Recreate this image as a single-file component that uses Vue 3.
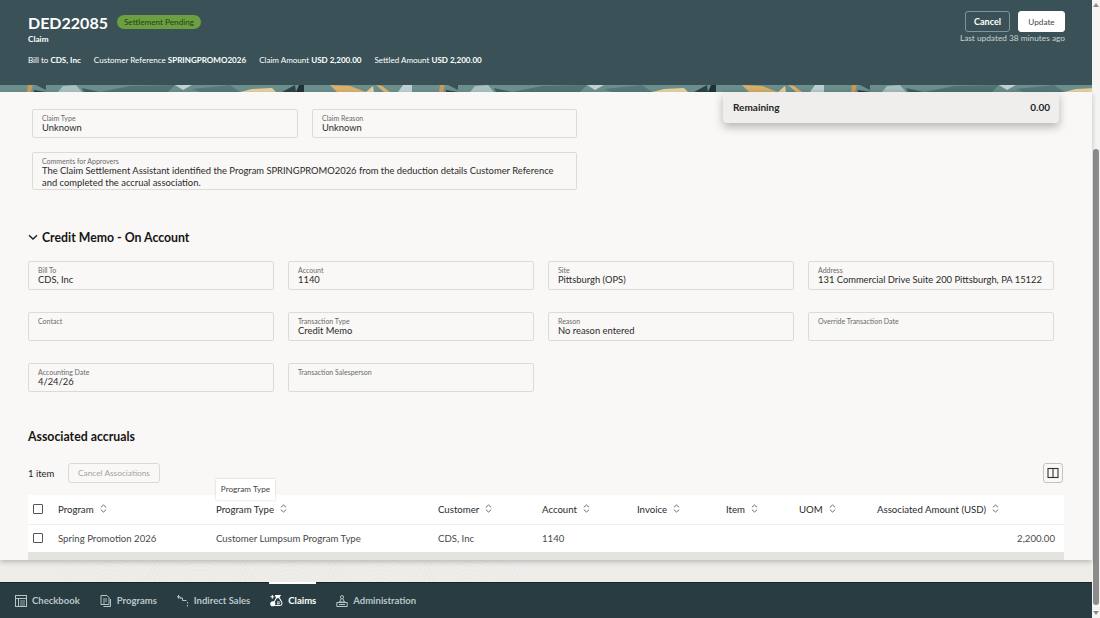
<script setup>
const metaItems = [
  { label: "Bill to", value: "CDS, Inc" },
  { label: "Customer Reference", value: "SPRINGPROMO2026" },
  { label: "Claim Amount", value: "USD 2,200.00" },
  { label: "Settled Amount", value: "USD 2,200.00" },
];

const memoFields = [
  { label: "Bill To", value: "CDS, Inc" },
  { label: "Account", value: "1140" },
  { label: "Site", value: "Pittsburgh (OPS)" },
  { label: "Address", value: "131 Commercial Drive Suite 200 Pittsburgh, PA 15122" },
  { label: "Contact", value: "" },
  { label: "Transaction Type", value: "Credit Memo" },
  { label: "Reason", value: "No reason entered" },
  { label: "Override Transaction Date", value: "" },
  { label: "Accounting Date", value: "4/24/26" },
  { label: "Transaction Salesperson", value: "" },
];

const columns = ["Program", "Program Type", "Customer", "Account", "Invoice", "Item", "UOM", "Associated Amount (USD)"];

const rowCells = ["Spring Promotion 2026", "Customer Lumpsum Program Type", "CDS, Inc", "1140", "", "", ""];

// grain rings in the band under the sheet
const rings = [];
for (const cx of [110, 200, 290, 380, 470]) {
  for (let r = 6; r < 62; r += 4) rings.push({ cx, r });
}
</script>

<template>
  <div class="app">
    <div class="main">
      <header class="head">
        <div class="head-top">
          <div class="head-left">
            <div class="title-row">
              <h1 class="title">DED22085</h1>
              <span class="pill">Settlement Pending</span>
            </div>
            <div class="subtitle">Claim</div>
            <div class="meta">
              <span v-for="m in metaItems" :key="m.label">{{ m.label }} <b>{{ m.value }}</b></span>
            </div>
          </div>
          <div class="head-right">
            <div class="head-btns">
              <button class="btn-ghost">Cancel</button>
              <button class="btn-white">Update</button>
            </div>
            <div class="updated">Last updated 38 minutes ago</div>
          </div>
        </div>
        <svg class="strip" width="100%" height="7">
          <defs>
            <pattern id="leafs" width="412" height="7" patternUnits="userSpaceOnUse">
              <rect width="412" height="7" fill="#6b8f8c" />
              <polygon points="28,0 33,0 31,7 27,7" fill="#c99b58" />
              <polygon points="34,5 46,7 34,7" fill="#2b4247" />
              <polygon points="36,0 46,0 46,5" fill="#3a5257" />
              <polygon points="58,7 63,1 76,0 82,7" fill="#a9c0c1" />
              <polygon points="82,3 100,7 84,7" fill="#3f5f62" />
              <polygon points="100,7 130,1 175,0 168,7" fill="#4f7472" />
              <polygon points="175,0 192,0 183,5" fill="#c0d0d3" />
              <polygon points="192,4 230,0 240,7 200,7" fill="#55787a" />
              <polygon points="240,7 252,4 272,3 276,7" fill="#e6cf9f" />
              <polygon points="282,7 295,0 296,7" fill="#2b4247" />
              <polygon points="296,7 299,0 304,0 304,7" fill="#1f3236" />
              <polygon points="330,0 350,1 366,7 337,7" fill="#d9b06c" />
              <polygon points="366,7 373,1 374,7" fill="#e6cf9f" />
              <polygon points="376,0 382,1 390,7 384,7" fill="#d9b06c" />
              <polygon points="398,7 403,0 420,0 424,7" fill="#bccfd2" />
            </pattern>
          </defs>
          <rect width="100%" height="7" fill="url(#leafs)" />
        </svg>
      </header>

      <section class="sheet">
        <div class="remaining">
          <span>Remaining</span>
          <span>0.00</span>
        </div>

        <div class="claim-grid">
          <div class="field">
            <label>Claim Type</label>
            <div class="val">Unknown</div>
          </div>
          <div class="field">
            <label>Claim Reason</label>
            <div class="val">Unknown</div>
          </div>
          <div class="field field-wide">
            <label>Comments for Approvers</label>
            <div class="val wrap">The Claim Settlement Assistant identified the Program SPRINGPROMO2026 from the deduction details Customer Reference and completed the accrual association.</div>
          </div>
        </div>

        <h2 class="section-title">
          <svg width="10" height="10" viewBox="0 0 10 10" fill="none" stroke="#1c1c1c" stroke-width="1.3">
            <path d="M1 3.2 5 7 9 3.2" />
          </svg>
          Credit Memo - On Account
        </h2>

        <div class="memo-grid">
          <div class="field" v-for="f in memoFields" :key="f.label">
            <label>{{ f.label }}</label>
            <div class="val">{{ f.value }}</div>
          </div>
        </div>

        <h2 class="accruals-title">Associated accruals</h2>

        <div class="toolbar">
          <span class="count">1 item</span>
          <button class="btn-disabled">Cancel Associations</button>
          <button class="btn-cols" aria-label="Columns">
            <svg width="12" height="12" viewBox="0 0 12 12" fill="none" stroke="#333" stroke-width="1.1">
              <rect x="1" y="1.5" width="10" height="9" />
              <path d="M6 1.5v9" />
            </svg>
          </button>
        </div>

        <div class="table">
          <div class="tooltip">Program Type</div>
          <div class="tr th">
            <div class="cell"><span class="check"></span></div>
            <div class="cell" v-for="c in columns" :key="c">
              {{ c }}
              <svg class="sort" width="7" height="9" viewBox="0 0 8 10" fill="none" stroke="#444" stroke-width="0.9">
                <path d="M1 3.6 4 1l3 2.6M1 6.4 4 9l3-2.6" />
              </svg>
            </div>
          </div>
          <div class="tr td">
            <div class="cell"><span class="check"></span></div>
            <div class="cell" v-for="(c, i) in rowCells" :key="i">{{ c }}</div>
            <div class="cell amount">2,200.00</div>
          </div>
          <div class="hscroll"></div>
        </div>
      </section>

      <div class="band">
        <svg width="100%" height="22" fill="none" stroke="#e6e5e1" stroke-width="0.5">
          <circle v-for="(g, i) in rings" :key="i" :cx="g.cx" cy="40" :r="g.r" />
        </svg>
      </div>

      <nav class="nav">
        <a class="nav-item">
          <svg width="12" height="12" viewBox="0 0 12 12" fill="none" stroke="#b9c6c8" stroke-width="1">
            <rect x="0.5" y="0.5" width="11" height="11" />
            <path d="M0.5 3.5h11M3.5 3.5v8" />
            <path d="M5 6h5M5 8h5M5 10h5" stroke-width="0.8" />
          </svg>
          Checkbook
        </a>
        <a class="nav-item">
          <svg width="12" height="12" viewBox="0 0 12 12" fill="none" stroke="#b9c6c8" stroke-width="1">
            <path d="M1 0.5h6l2 2v7H1z" />
            <path d="M3 4h4M3 6h4M3 8h2" stroke-width="0.9" />
            <path d="M10.5 4v7.5H3.5" />
          </svg>
          Programs
        </a>
        <a class="nav-item">
          <svg width="12" height="12" viewBox="0 0 12 12" fill="none" stroke="#b9c6c8" stroke-width="1">
            <path d="M1.5 0v3.5M0 1.8h3.5" />
            <path d="M3.5 3h2v2.5h4" />
            <circle cx="3.2" cy="3" r="0.8" fill="#b9c6c8" stroke="none" />
            <path d="M10.5 7v1.5M10.5 10v1.5" />
          </svg>
          Indirect Sales
        </a>
        <a class="nav-item active">
          <svg width="13" height="13" viewBox="0 0 14 14" fill="none" stroke="#fff" stroke-width="1.1">
            <path d="M0.5 3h4M2.5 1v4" />
            <path d="M6 1.5h5L9.5 4H7z" fill="#fff" />
            <path d="M7 4 4.5 8.5c-1 2 0 4 2.5 4h3c2.5 0 3.5-2 2.5-4L10 4" />
            <circle cx="3" cy="10.5" r="2.2" fill="#fff" />
            <path d="M7.5 8.5h3M7.5 10.5h3" />
          </svg>
          Claims
        </a>
        <a class="nav-item">
          <svg width="12" height="12" viewBox="0 0 12 12" fill="none" stroke="#b9c6c8" stroke-width="1">
            <circle cx="6" cy="2.2" r="1.6" />
            <path d="M5 4 3.5 7h5L7 4" />
            <path d="M0.8 7.5h10.4v4H0.8z" />
            <path d="M3 9.5h6" />
          </svg>
          Administration
        </a>
      </nav>
    </div>

    <div class="scrollbar">
      <span class="arrow up"></span>
      <div class="thumb"></div>
      <span class="arrow down"></span>
    </div>
  </div>
</template>

<style scoped>
.app {
  display: flex;
  height: 618px;
  font-family: Lato, "Noto Sans", sans-serif;
  color: #1f1f1f;
}
.main {
  flex: 1;
  min-width: 0;
  display: flex;
  flex-direction: column;
}
.head {
  height: 92px;
  flex: none;
  background: #3a5257;
  color: #fff;
  display: flex;
  flex-direction: column;
  justify-content: space-between;
}
.head-top {
  display: flex;
  justify-content: space-between;
  padding: 11px 27px 0 28px;
}
.title-row {
  display: flex;
  align-items: center;
  gap: 9px;
  height: 22px;
}
.title {
  margin: 0;
  font-size: 16px;
  font-weight: 700;
}
.pill {
  background: #6c9f3f;
  color: #26401a;
  font-size: 8.2px;
  padding: 0 7px;
  height: 14px;
  line-height: 14px;
  border-radius: 7px;
}
.subtitle {
  font-size: 8.2px;
  font-weight: 700;
  line-height: 12px;
}
.meta {
  display: flex;
  gap: 13px;
  margin-top: 9px;
  font-size: 8.05px;
  line-height: 12px;
}
.meta b {
  font-weight: 700;
}
.head-right {
  display: flex;
  flex-direction: column;
  align-items: flex-end;
}
.head-btns {
  display: flex;
  gap: 8px;
}
.btn-ghost,
.btn-white {
  font-family: inherit;
  height: 21px;
  border-radius: 3px;
  padding: 0;
}
.btn-ghost {
  width: 45px;
  background: transparent;
  border: 1px solid #7f9599;
  color: #fff;
  font-size: 9px;
  font-weight: 700;
}
.btn-white {
  width: 47px;
  background: #fff;
  border: 1px solid #fff;
  color: #444;
  font-size: 8.2px;
}
.updated {
  font-size: 8.3px;
  line-height: 12px;
  color: #c9d3d4;
}
.strip {
  display: block;
  flex: none;
}
.sheet {
  position: relative;
  flex: 1;
  min-height: 0;
  background: #f9f8f6;
  padding: 17px 28px 0;
  box-shadow: 0 2px 5px rgba(0, 0, 0, 0.22);
  z-index: 1;
}
.remaining {
  position: absolute;
  top: 0;
  right: 33px;
  width: 336px;
  height: 31px;
  box-sizing: border-box;
  padding: 0 9px 2px 10px;
  display: flex;
  justify-content: space-between;
  align-items: center;
  background: #efeeec;
  border-radius: 0 0 4px 4px;
  box-shadow: 0 4px 10px rgba(0, 0, 0, 0.28);
  font-size: 10px;
  font-weight: 700;
}
.claim-grid {
  margin-left: 4px;
  width: 545px;
  display: grid;
  grid-template-columns: 266px 265px;
  gap: 14px;
}
.field {
  box-sizing: border-box;
  height: 29px;
  padding: 5px 9px 0;
  border: 1px solid #dedbd7;
  border-radius: 2px;
  background: #f9f8f6;
}
.field label {
  display: block;
  font-size: 7px;
  line-height: 7px;
  color: #6a6a6a;
}
.field .val {
  font-size: 9.4px;
  line-height: 12px;
  color: #2a2a2a;
  white-space: nowrap;
}
.field .val.wrap {
  white-space: normal;
}
.field-wide {
  grid-column: 1 / span 2;
  height: 38px;
}
.section-title {
  margin: 39px 0 0;
  height: 16px;
  display: flex;
  align-items: center;
  gap: 4px;
  font-size: 12.3px;
  font-weight: 700;
  color: #161513;
}
.memo-grid {
  margin-top: 16px;
  width: 1027px;
  display: grid;
  grid-template-columns: repeat(4, 246px);
  gap: 22px 14px;
}
.accruals-title {
  margin: 37px 0 0;
  height: 16px;
  line-height: 16px;
  font-size: 12.3px;
  font-weight: 700;
  color: #161513;
}
.toolbar {
  margin-top: 18px;
  width: 1035px;
  height: 20px;
  display: flex;
  align-items: center;
  font-size: 9.5px;
}
.count {
  width: 40px;
}
.btn-disabled {
  width: 92px;
  height: 20px;
  padding: 0;
  background: transparent;
  border: 1px solid #dcd9d5;
  border-radius: 3px;
  font-family: inherit;
  font-size: 8.3px;
  color: #a5a3a0;
}
.btn-cols {
  margin-left: auto;
  width: 20px;
  height: 20px;
  padding: 0;
  display: flex;
  align-items: center;
  justify-content: center;
  background: transparent;
  border: 1px solid #c4c2be;
  border-radius: 3px;
}
.table {
  position: relative;
  margin-top: 12px;
  width: 1036px;
  background: #fff;
}
.tooltip {
  position: absolute;
  left: 188px;
  top: -16px;
  width: 59px;
  height: 21px;
  line-height: 21px;
  text-align: center;
  background: #fff;
  font-size: 8.2px;
  color: #444;
  box-shadow: 0 0 2px rgba(0, 0, 0, 0.2);
  z-index: 2;
}
.tr {
  display: grid;
  grid-template-columns: 30px 158px 222px 104px 95px 89px 73px 78px 187px;
  align-items: center;
  font-size: 9.65px;
  padding-bottom: 2px;
  box-sizing: border-box;
}
.th {
  height: 30px;
  border-bottom: 1px solid #f0efed;
  color: #2a2a2a;
}
.td {
  height: 27px;
  color: #4a4a4a;
}
.cell {
  display: flex;
  align-items: center;
  white-space: nowrap;
}
.sort {
  margin-left: 6px;
}
.amount {
  justify-content: flex-end;
  padding-right: 9px;
}
.check {
  display: block;
  margin-left: 5px;
  width: 8px;
  height: 8px;
  border: 1px solid #555;
  border-radius: 1px;
}
.hscroll {
  height: 8px;
  background: #e4e3e0;
}
.band {
  height: 22px;
  flex: none;
  background: #eeedea;
  overflow: hidden;
}
.band svg {
  display: block;
}
.nav {
  position: relative;
  height: 36px;
  flex: none;
  box-sizing: border-box;
  border-top: 1px solid #16262a;
  background: #293c42;
  display: flex;
  align-items: center;
  gap: 20px;
  padding: 0 0 0 15px;
}
.nav-item {
  position: relative;
  display: flex;
  align-items: center;
  gap: 5px;
  font-size: 9.5px;
  font-weight: 700;
  color: #b9c6c8;
}
.nav-item.active {
  color: #fff;
}
.nav-item.active::before {
  content: "";
  position: absolute;
  top: -12px;
  left: -1px;
  right: 0;
  height: 2px;
  background: #fff;
}
.scrollbar {
  width: 8px;
  flex: none;
  background: #f4f4f3;
  display: flex;
  flex-direction: column;
  align-items: center;
  padding: 3px 0;
  box-sizing: border-box;
}
.thumb {
  width: 6px;
  flex: 1;
  margin: 142px 0 6px;
  border-radius: 3px;
  background: #8c8c8c;
}
.arrow {
  width: 0;
  height: 0;
  border-left: 3px solid transparent;
  border-right: 3px solid transparent;
}
.arrow.up {
  border-bottom: 4px solid #8c8c8c;
}
.arrow.down {
  border-top: 4px solid #8c8c8c;
}
</style>

<style>
html,
body {
  margin: 0;
  overflow: hidden;
}
</style>
